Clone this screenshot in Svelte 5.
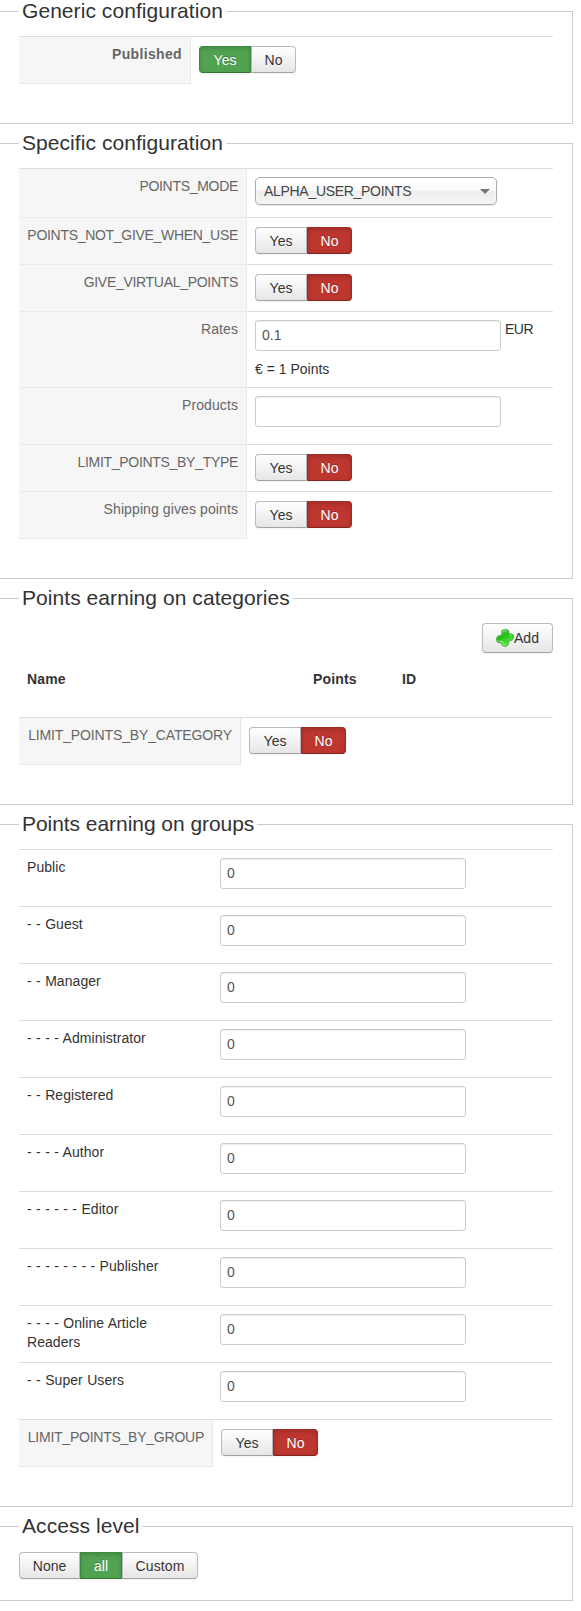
<script lang="ts">
	type Kind = 'radio' | 'select' | 'text' | 'rate';

	interface Field {
		label: string;
		kind: Kind;
		value: string;
	}

	interface Group {
		name: string;
		points: string;
	}

	let published = $state('Yes');
	let limitCategory = $state('No');
	let limitGroup = $state('No');
	let access = $state('all');

	let fields = $state<Field[]>([
		{ label: 'POINTS_MODE', kind: 'select', value: 'ALPHA_USER_POINTS' },
		{ label: 'POINTS_NOT_GIVE_WHEN_USE', kind: 'radio', value: 'No' },
		{ label: 'GIVE_VIRTUAL_POINTS', kind: 'radio', value: 'No' },
		{ label: 'Rates', kind: 'rate', value: '0.1' },
		{ label: 'Products', kind: 'text', value: '' },
		{ label: 'LIMIT_POINTS_BY_TYPE', kind: 'radio', value: 'No' },
		{ label: 'Shipping gives points', kind: 'radio', value: 'No' }
	]);

	let groups = $state<Group[]>([
		{ name: 'Public', points: '0' },
		{ name: '- - Guest', points: '0' },
		{ name: '- - Manager', points: '0' },
		{ name: '- - - - Administrator', points: '0' },
		{ name: '- - Registered', points: '0' },
		{ name: '- - - - Author', points: '0' },
		{ name: '- - - - - - Editor', points: '0' },
		{ name: '- - - - - - - - Publisher', points: '0' },
		{ name: '- - - - Online Article Readers', points: '0' },
		{ name: '- - Super Users', points: '0' }
	]);

	// constants are written in capitals and set tighter
	const isKey = (label: string) => label === label.toUpperCase();
</script>

{#snippet radio(value: string, pick: (v: string) => void)}
	<div class="btn-group">
		{#each ['Yes', 'No'] as option (option)}
			<button
				class="btn {option.toLowerCase()}"
				class:success={value === option && option === 'Yes'}
				class:danger={value === option && option === 'No'}
				onclick={() => pick(option)}>{option}</button>
		{/each}
	</div>
{/snippet}

<fieldset>
	<legend>Generic configuration</legend>
	<div class="table narrow">
		<div class="row radio">
			<div class="key strong">Published</div>
			<div class="control">{@render radio(published, (v) => (published = v))}</div>
		</div>
	</div>
</fieldset>

<fieldset>
	<legend>Specific configuration</legend>
	<div class="table wide">
		{#each fields as field (field.label)}
			<div class="row {field.kind}">
				<div class="key" class:caps={isKey(field.label)}>{field.label}</div>
				<div class="control">
					{#if field.kind === 'radio'}
						{@render radio(field.value, (v) => (field.value = v))}
					{:else if field.kind === 'select'}
						<div class="select">
							<span class="caps">{field.value}</span>
							<span class="caret"></span>
						</div>
					{:else}
						<div class="entry">
							<input type="text" bind:value={field.value} />
							{#if field.kind === 'rate'}<span class="unit">EUR</span>{/if}
						</div>
						{#if field.kind === 'rate'}<div>€ = 1 Points</div>{/if}
					{/if}
				</div>
			</div>
		{/each}
	</div>
</fieldset>

<fieldset>
	<legend>Points earning on categories</legend>
	<div class="toolbar">
		<button class="add">
			<svg width="18" height="18" viewBox="0 0 18 18">
				<defs>
					<linearGradient id="leaf" x1="0" y1="0" x2="0.6" y2="1">
						<stop offset="0" stop-color="#5fd04f" />
						<stop offset="0.45" stop-color="#22bd18" />
						<stop offset="1" stop-color="#5fee48" />
					</linearGradient>
				</defs>
				<path
					d="M5.6 3.2Q5.4 1 7.6.8L10.4.6Q12.8.6 12.8 2.8L12.8 4.8L15 4.8Q17.5 4.9 17.5 7L17.4 9Q17.2 11.2 15 11.4L13 11.6L12.6 14.6Q12.2 17 9.8 17.3L8 17.3Q5.6 17 5.7 14.8L5.7 13.6L3.4 13.9Q.8 13.8.6 11.5L.7 9.2Q.9 7 3 6.7L5.8 6.3Z"
					fill="url(#leaf)"
					stroke="#3fa535"
					stroke-width="0.8"
				/>
				<path d="M6.8 3.4Q7 2 8.2 1.9L11.2 1.8M13.6 6L16 6.2" fill="none" stroke="#a5e79b" stroke-width="0.8" />
				<path d="M1.9 11.4Q2.2 12.6 3.6 12.6L6.8 12.4L7 15.2Q7.2 16.1 9.2 16" fill="none" stroke="#9df58b" stroke-width="1" />
			</svg>Add
		</button>
	</div>
	<div class="columns">
		<span>Name</span>
		<span>Points</span>
		<span>ID</span>
	</div>
	<div class="table category">
		<div class="row radio">
			<div class="key caps">LIMIT_POINTS_BY_CATEGORY</div>
			<div class="control">{@render radio(limitCategory, (v) => (limitCategory = v))}</div>
		</div>
	</div>
</fieldset>

<fieldset>
	<legend class="tight">Points earning on groups</legend>
	<div class="groups">
		{#each groups as group (group.name)}
			<div class="group">
				<div class="group-name">{group.name}</div>
				<input type="text" bind:value={group.points} />
			</div>
		{/each}
	</div>
	<div class="table limit">
		<div class="row radio">
			<div class="key caps">LIMIT_POINTS_BY_GROUP</div>
			<div class="control">{@render radio(limitGroup, (v) => (limitGroup = v))}</div>
		</div>
	</div>
</fieldset>

<fieldset class="access">
	<legend>Access level</legend>
	<div class="btn-group">
		{#each ['None', 'all', 'Custom'] as level (level)}
			<button
				class="btn {level.toLowerCase()}"
				class:success={access === level}
				onclick={() => (access = level)}>{level}</button>
		{/each}
	</div>
</fieldset>

<style>
	:global(body) {
		background: #fff;
		color: #333;
		font: 14px/19px 'Liberation Sans', Arial, sans-serif;
	}

	fieldset {
		box-sizing: border-box;
		width: 573px;
		margin: 0 0 8px;
		padding: 13px 19px 39px;
		border: 1px solid #ccc;
		border-left: 0;
	}

	.access {
		padding-top: 14px;
		padding-bottom: 21px;
	}

	legend {
		padding: 0 3px 2px;
		font-size: 21px;
		line-height: 21px;
		letter-spacing: 0.06px;
	}

	.tight {
		letter-spacing: -0.05px;
	}

	.row {
		display: flex;
		box-sizing: border-box;
	}

	.row.radio {
		height: 47px;
	}

	.row.select {
		height: 49px;
	}

	.row.rate {
		height: 76px;
	}

	.row.text {
		height: 57px;
	}

	.row.radio:last-child {
		height: 48px;
	}

	.key {
		box-sizing: border-box;
		flex: none;
		padding: 8px 8px 0;
		border-top: 1px solid #e9e9e9;
		border-right: 1px solid #e9e9e9;
		background: #f6f6f6;
		color: #666;
		letter-spacing: 0.1px;
		text-align: right;
		white-space: nowrap;
	}

	.row:first-child .key {
		border-top-color: #ddd;
	}

	.row:last-child .key {
		border-bottom: 1px solid #e9e9e9;
	}

	.narrow .key {
		width: 172px;
	}

	.wide .key {
		width: 228px;
	}

	.category .key {
		width: 222px;
		letter-spacing: -0.14px;
	}

	.limit .key {
		width: 194px;
		letter-spacing: -0.24px;
	}

	.strong {
		font-weight: bold;
		letter-spacing: 0.35px;
	}

	.caps {
		letter-spacing: -0.3px;
	}

	.control {
		flex: 1;
		padding: 8px 0 0 8px;
		border-top: 1px solid #ddd;
	}

	.radio .control {
		padding-top: 9px;
	}

	.btn-group {
		display: flex;
	}

	.btn {
		box-sizing: border-box;
		height: 27px;
		margin: 0;
		padding: 2px 0 0;
		border: 1px solid #bbb;
		border-bottom-color: #a2a2a2;
		border-left-width: 0;
		background: linear-gradient(#fff, #e6e6e6);
		box-shadow: inset 0 1px 0 rgba(255, 255, 255, 0.2), 0 1px 2px rgba(0, 0, 0, 0.05);
		color: #333;
		font: inherit;
		text-shadow: 0 1px 1px rgba(255, 255, 255, 0.75);
		cursor: pointer;
	}

	.btn:first-child {
		border-left-width: 1px;
		border-radius: 4px 0 0 4px;
	}

	.btn:last-child {
		border-radius: 0 4px 4px 0;
	}

	.success,
	.danger {
		border-left-width: 1px;
		box-shadow: inset 0 2px 4px rgba(0, 0, 0, 0.15), 0 1px 2px rgba(0, 0, 0, 0.05);
		color: #fff;
		text-shadow: 0 -1px 0 rgba(0, 0, 0, 0.25);
	}

	.success {
		border-color: #3d893d #3d893d #347534;
		background: #51a351;
	}

	.success + .btn {
		border-left-width: 1px;
	}

	.danger {
		border-color: #a12a25 #a12a25 #802420;
		background: #bd362f;
	}

	.yes {
		width: 52px;
	}

	.no {
		width: 45px;
	}

	.none {
		width: 61px;
	}

	.all {
		width: 42px;
	}

	.custom {
		width: 76px;
		letter-spacing: 0.1px;
	}

	.select .control .select {
		display: flex;
		align-items: center;
		justify-content: space-between;
		box-sizing: border-box;
		width: 242px;
		height: 28px;
		padding: 0 6px 0 8px;
		border: 1px solid #aaa;
		border-radius: 5px;
		background: linear-gradient(#fff 20%, #f6f6f6 50%, #eee 52%, #f4f4f4);
		box-shadow: inset 0 0 3px #fff, 0 1px 1px rgba(0, 0, 0, 0.1);
		color: #444;
	}

	.caret {
		border: 5px solid transparent;
		border-top: 5px solid #777;
		border-bottom: 0;
	}

	.entry {
		display: flex;
		gap: 4px;
		margin-bottom: 9px;
	}

	.unit {
		letter-spacing: -0.5px;
	}

	input {
		box-sizing: border-box;
		flex: none;
		width: 246px;
		height: 31px;
		margin: 0;
		padding: 3px 6px 5px;
		border: 1px solid #ccc;
		border-radius: 3px;
		background: #fff;
		box-shadow: inset 0 1px 1px rgba(0, 0, 0, 0.075);
		color: #555;
		font: inherit;
	}

	.toolbar {
		display: flex;
		justify-content: flex-end;
	}

	.add {
		display: flex;
		align-items: center;
		justify-content: center;
		box-sizing: border-box;
		width: 71px;
		height: 30px;
		padding: 0;
		border: 1px solid #bbb;
		border-bottom-color: #a2a2a2;
		border-radius: 4px;
		background: linear-gradient(#fff, #e6e6e6);
		box-shadow: 0 1px 2px rgba(0, 0, 0, 0.05);
		color: #333;
		font: inherit;
		cursor: pointer;
	}

	.columns {
		display: grid;
		grid-template-columns: 286px 89px 1fr;
		padding: 17px 8px 28px;
		font-weight: bold;
		letter-spacing: 0.15px;
	}

	.group {
		display: flex;
		box-sizing: border-box;
		height: 57px;
		padding: 8px 0 0 8px;
		border-top: 1px solid #ddd;
	}

	.group-name {
		box-sizing: border-box;
		width: 193px;
		padding-right: 60px;
		letter-spacing: 0.06px;
		word-spacing: 0.4px;
	}
</style>
